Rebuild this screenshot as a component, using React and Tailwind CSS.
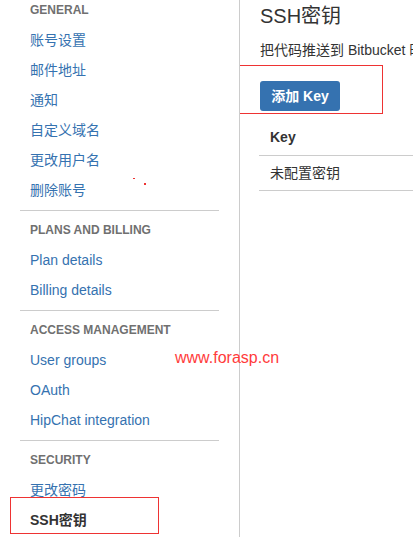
const sections = [
  {
    title: 'GENERAL',
    items: ['账号设置', '邮件地址', '通知', '自定义域名', '更改用户名', '删除账号'],
  },
  { title: 'PLANS AND BILLING', items: ['Plan details', 'Billing details'] },
  { title: 'ACCESS MANAGEMENT', items: ['User groups', 'OAuth', 'HipChat integration'] },
  { title: 'SECURITY', items: ['更改密码', 'SSH密钥'] },
];

const font = "font-['Liberation_Sans','Noto_Sans_CJK_SC',sans-serif]";

const Sidebar = () => (
  <div className="relative w-[240px] shrink-0 border-r border-[#cccccc] pl-[20px] pr-[20px]">
    <div className="-mt-[5px]">
      {sections.map((section, i) => (
        <div
          key={section.title}
          className={i > 0 ? 'mt-[5px] border-t border-[#cccccc] pt-[4px]' : ''}
        >
          <div className="flex h-[30px] items-center px-[10px] text-[12px] font-bold uppercase text-[#707070]">
            {section.title}
          </div>
          {section.items.map((item) => (
            <div
              key={item}
              className={`flex h-[30px] items-center px-[10px] text-[14px] ${
                item === 'SSH密钥' ? 'font-bold text-[#333333]' : 'text-[#3572b0]'
              }`}
            >
              {item}
            </div>
          ))}
        </div>
      ))}
    </div>

    {/* annotation box */}
    <div className="absolute left-[10px] top-[497px] h-[37px] w-[149px] border border-[#ee3333]" />
    {/* stray dots */}
    <div className="absolute left-[133px] top-[178px] h-[1px] w-[2px] bg-[#ee3333]" />
    <div className="absolute left-[144px] top-[183px] h-[2px] w-[2px] bg-[#ee3333]" />
  </div>
);

const Content = () => (
  <div className="relative min-w-0 flex-1 overflow-hidden pl-[20px]">
    <h1 className="h-[32px] whitespace-nowrap text-[20px] leading-[32px] text-[#333333]">SSH密钥</h1>
    <p className="h-[36px] whitespace-nowrap text-[14px] leading-[36px] text-[#333333]">
      把代码推送到 Bitbucket 时使用 SSH 密钥进行身份验证
    </p>
    <button className="mt-[13px] flex h-[30px] w-[80px] items-center justify-center rounded-[3px] bg-[#3572b0] text-[14px] font-bold text-white">
      添加 Key
    </button>

    <div className="mt-[9px] -ml-[1px] w-[400px] text-[14px] text-[#333333]">
      <div className="flex h-[36px] items-center border-b border-[#cccccc] px-[11px] font-bold">
        Key
      </div>
      <div className="flex h-[35px] items-center border-b border-[#cccccc] px-[11px]">
        未配置密钥
      </div>
    </div>

    {/* annotation box */}
    <div className="absolute left-[-4px] top-[65px] h-[49px] w-[147px] border border-[#ee3333]" />
  </div>
);

export default function App() {
  return (
    <div className={`relative flex h-[537px] w-[413px] overflow-hidden bg-white ${font}`}>
      <Sidebar />
      <Content />
      <div className="absolute left-[175px] top-[347px] text-[16px] leading-[22px] text-[#ff3b3b]">
        www.forasp.cn
      </div>
    </div>
  );
}
